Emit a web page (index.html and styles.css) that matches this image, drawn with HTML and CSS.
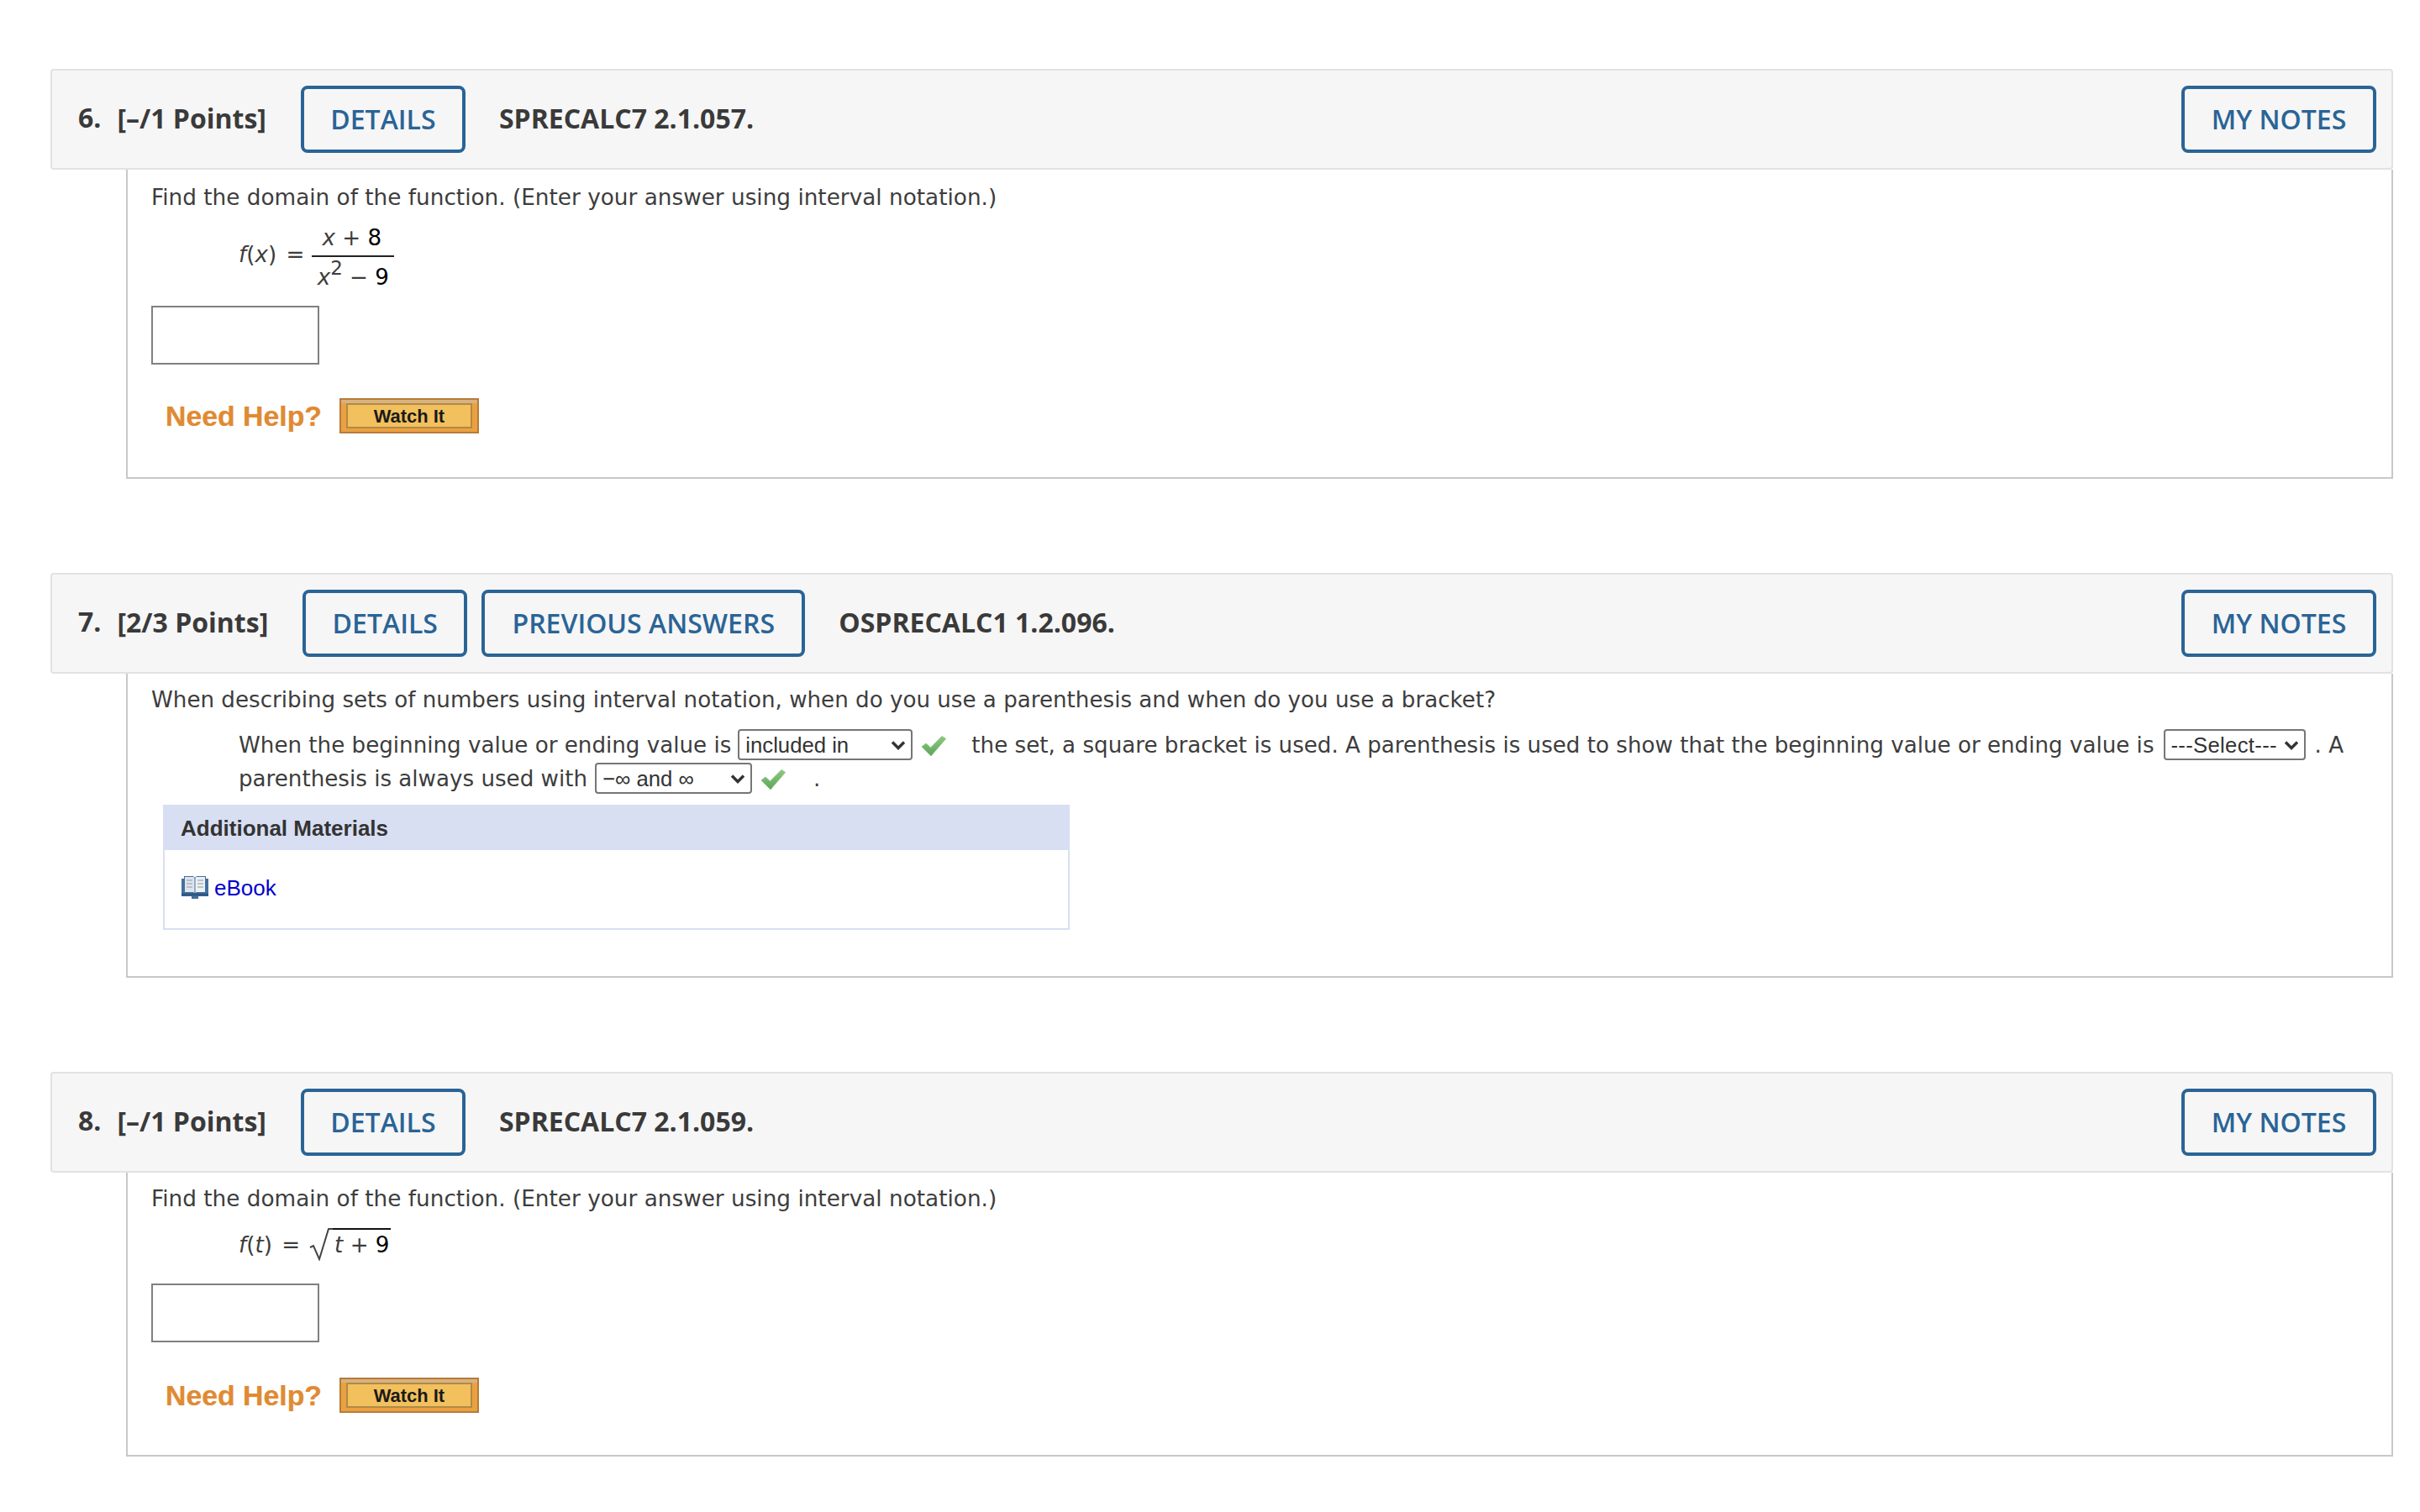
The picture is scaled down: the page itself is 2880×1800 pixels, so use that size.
FILE: index.html
```html
<!DOCTYPE html>
<html lang="en">
<head>
<meta charset="utf-8">
<title>Questions</title>
<link rel="stylesheet" href="styles.css">
</head>
<body>
<svg class="defs" width="0" height="0" aria-hidden="true">
  <defs>
    <linearGradient id="tickfill" x1="0" y1="0" x2="0" y2="1">
      <stop offset="0" stop-color="#8cc97f"/>
      <stop offset="1" stop-color="#5fa45c"/>
    </linearGradient>
    <symbol id="check" viewBox="0 0 30 26">
      <path d="M1 14 L6 10 L11.5 15 L25 1.5 L29.5 4.5 L12 25 Z" fill="url(#tickfill)" stroke="#8cc585" stroke-width="1" stroke-linejoin="round"/>
    </symbol>
  </defs>
</svg>

<section class="question">
  <header class="qhead">
    <span class="qnum">6.</span>
    <span class="qpoints">[–/1 Points]</span>
    <a class="btn">DETAILS</a>
    <span class="qcode">SPRECALC7 2.1.057.</span>
    <a class="btn btn-notes">MY NOTES</a>
  </header>
  <div class="qbody">
    <p class="lead">Find the domain of the function. (Enter your answer using interval notation.)</p>
    <div class="formula">
      <span class="math"><i>f</i>(<i>x</i>) =</span>
      <span class="frac">
        <span class="num"><i>x</i> + <b class="dark">8</b></span>
        <span class="den"><i>x</i><sup>2</sup> − <b class="dark">9</b></span>
      </span>
    </div>
    <input class="answer" type="text" aria-label="answer">
    <div class="help">
      <span class="help-label">Need Help?</span>
      <span class="watch"><span class="watch-in">Watch It</span></span>
    </div>
  </div>
</section>

<section class="question">
  <header class="qhead">
    <span class="qnum">7.</span>
    <span class="qpoints">[2/3 Points]</span>
    <a class="btn">DETAILS</a>
    <a class="btn btn-prev">PREVIOUS ANSWERS</a>
    <span class="qcode">OSPRECALC1 1.2.096.</span>
    <a class="btn btn-notes">MY NOTES</a>
  </header>
  <div class="qbody qbody-mid">
    <p class="lead lead-mid">When describing sets of numbers using interval notation, when do you use a parenthesis and when do you use a bracket?</p>
    <div class="para">
      <div class="pline">
        <span>When the beginning value or ending value is</span>
        <select class="sel sel-a"><option>included in</option></select>
        <svg class="tick"><use href="#check"/></svg>
        <span class="after-tick">the set, a square bracket is used. A parenthesis is used to show that the beginning value or ending value is</span>
        <select class="sel sel-b"><option>---Select---</option></select>
        <span class="tail">. A</span>
      </div>
      <div class="pline pline-2">
        <span>parenthesis is always used with</span>
        <select class="sel sel-c"><option>−∞ and ∞</option></select>
        <svg class="tick"><use href="#check"/></svg>
        <span class="dot">.</span>
      </div>
    </div>
    <div class="materials">
      <div class="mat-head">Additional Materials</div>
      <div class="mat-body">
        <svg class="book" viewBox="0 0 34 30" aria-hidden="true">
          <path d="M1 5 H4 V2 H15 L17 4 L19 2 H30 V5 H33 V26 H21 V29 H13 V26 H1 Z" fill="#43709f"/>
          <path d="M5 3 H15.5 L16.5 5 V22 L15 21 H5 Z" fill="#dfe5ea"/>
          <path d="M29 3 H18.5 L17.5 5 V22 L19 21 H29 Z" fill="#eef1f3"/>
          <path d="M7 7 H14 M7 11 H14 M7 15 H14 M20 7 H27 M20 11 H27 M20 15 H27" stroke="#a9b4bf" stroke-width="1.6"/>
          <path d="M1 24 H33" stroke="#2e5682" stroke-width="3"/>
        </svg>
        <a class="ebook">eBook</a>
      </div>
    </div>
  </div>
</section>

<section class="question">
  <header class="qhead">
    <span class="qnum">8.</span>
    <span class="qpoints">[–/1 Points]</span>
    <a class="btn">DETAILS</a>
    <span class="qcode">SPRECALC7 2.1.059.</span>
    <a class="btn btn-notes">MY NOTES</a>
  </header>
  <div class="qbody qbody-root">
    <p class="lead">Find the domain of the function. (Enter your answer using interval notation.)</p>
    <div class="formula formula-root">
      <span class="math"><i>f</i>(<i>t</i>) =</span>
      <svg class="radical" viewBox="0 0 28 40" aria-hidden="true">
        <path d="M1 24 L5 22 L12 38 L23 2 H28" fill="none" stroke="#444" stroke-width="2"/>
      </svg>
      <span class="radicand"><i>t</i> + <b class="dark">9</b></span>
    </div>
    <input class="answer answer-root" type="text" aria-label="answer">
    <div class="help help-root">
      <span class="help-label">Need Help?</span>
      <span class="watch"><span class="watch-in">Watch It</span></span>
    </div>
  </div>
</section>
</body>
</html>
```

FILE: styles.css
```css
html, body { margin: 0; padding: 0; background: #fff; }
body {
  padding: 82px 32px 0 60px;
  font-family: "DejaVu Sans", Verdana, sans-serif;
  font-size: 26.15px;
  color: #3d3d3d;
}
.defs { position: absolute; }
.question { margin-bottom: 112px; }
.qhead {
  display: flex;
  align-items: center;
  height: 120px;
  box-sizing: border-box;
  padding: 0 18px 0 31px;
  background: #f6f6f6;
  border: 2px solid #e2e2e2;
  border-radius: 4px;
  font-family: "Open Sans", sans-serif;
  font-weight: 700;
  font-size: 32px;
  color: #3a3a3a;
}
.qnum { margin-right: 19px; margin-bottom: 5px; }
.qpoints { margin-right: 41px; margin-bottom: 3px; }
.btn {
  display: flex;
  align-items: center;
  justify-content: center;
  box-sizing: border-box;
  width: 196px;
  height: 80px;
  padding-bottom: 2px;
  border: 4px solid #2a6496;
  border-radius: 8px;
  color: #2a6496;
  font-weight: 600;
}
.btn-prev { width: 385px; margin-left: 17px; }
.qcode { margin-left: 40px; margin-bottom: 3px; }
.btn-notes { margin-left: auto; width: 232px; }
.qbody {
  margin-left: 90px;
  padding: 13px 0 52px 28px;
  border: 2px solid #c8c8c8;
  border-top: 0;
}
.lead { margin: 0; height: 40px; line-height: 40px; font-size: 26.3px; }
.formula {
  display: flex;
  align-items: center;
  height: 90px;
  margin: 6px 0 0 104px;
}
.math { margin-right: 9px; position: relative; top: -3px; word-spacing: 3px; }
.frac { display: inline-flex; flex-direction: column; align-items: center; width: 98px; }
.num { height: 43px; line-height: 44px; margin-right: 3px; }
.den {
  align-self: stretch;
  text-align: center;
  height: 45px;
  line-height: 48px;
  border-top: 2px solid #222;
}
.den sup { font-size: 23px; line-height: 0; vertical-align: 12px; }
.dark { font-weight: 400; color: #000; }
.answer {
  display: block;
  box-sizing: border-box;
  width: 200px;
  height: 70px;
  margin: 13px 0 0;
  padding: 0;
  border: 2px solid #808080;
  background: #fff;
  border-radius: 0;
  outline: 0;
}
.help { display: flex; align-items: center; height: 42px; margin-top: 40px; padding-left: 17px; }
.help-root { margin-top: 42px; }
.help-label {
  font-family: "Liberation Sans", Arial, sans-serif;
  font-weight: 700;
  font-size: 33.8px;
  color: #e08a33;
  text-shadow: 0 0 1px rgba(224, 138, 51, 0.5);
}
.watch {
  display: block;
  box-sizing: border-box;
  width: 166px;
  height: 42px;
  margin-left: 21px;
  padding: 4px 6px;
  background: #eba13f;
  border: 2px solid #b47c3c;
  box-shadow: inset 0 4px 0 #d8b27f;
}
.watch-in {
  display: block;
  height: 100%;
  box-sizing: border-box;
  border: 2px solid #b08a48;
  background: #f2c05c;
  text-align: center;
  font-family: "Liberation Sans", Arial, sans-serif;
  font-weight: 700;
  font-size: 21.9px;
  line-height: 27px;
  color: #1a1a1a;
}
.qbody-mid { padding: 13px 0 55px 28px; }
.lead-mid { height: 36px; line-height: 36px; font-size: 26.15px; }
.para { margin: 17px 0 0 104px; }
.pline { display: flex; align-items: center; height: 37px; white-space: nowrap; }
.pline-2 { margin-top: 3px; }
.sel {
  appearance: none;
  box-sizing: border-box;
  height: 37px;
  margin: 0 0 0 8px;
  padding: 0 0 0 7px;
  border: 2px solid #767676;
  border-radius: 4px;
  background: #fff url("data:image/svg+xml,%3Csvg xmlns='http://www.w3.org/2000/svg' width='18' height='12'%3E%3Cpath d='M2 2.5 L9 9.5 L16 2.5' fill='none' stroke='%23333' stroke-width='3.4'/%3E%3C/svg%3E") no-repeat right 6px center;
  color: #333;
  font-family: "Liberation Sans", Arial, sans-serif;
  font-size: 25.7px;
}
.sel-a { width: 208px; }
.sel-b { width: 169px; margin-left: 11px; padding-left: 7px; letter-spacing: 0.3px; }
.sel-c { width: 187px; margin-left: 9px; }
.tick { width: 30px; height: 26px; margin: 2px 0 0 10px; flex: none; }
.after-tick { margin-left: 30px; }
.tail { margin-left: 11px; }
.dot { margin-left: 33px; }
.materials {
  width: 1079px;
  box-sizing: border-box;
  margin: 13px 0 0 14px;
  border: 2px solid #d8dff3;
  height: 149px;
  font-family: "Liberation Sans", Arial, sans-serif;
  font-size: 26px;
}
.mat-head {
  height: 52px;
  line-height: 52px;
  padding-left: 19px;
  background: #d8dff3;
  font-weight: 700;
  color: #333;
}
.mat-body { display: flex; align-items: center; height: 91px; padding-left: 19px; }
.book { width: 34px; height: 30px; margin-right: 6px; position: relative; top: -2px; }
.ebook { color: #0000cc; }
.qbody-root { padding-top: 11px; padding-bottom: 50px; }
.formula-root { height: 40px; margin-top: 15px; }
.formula-root .math { margin-right: 11px; top: 0; }
.radical { width: 28px; height: 40px; flex: none; margin-top: -2px; }
.radicand { border-top: 2px solid #111; line-height: 36px; height: 36px; margin-top: -3px; padding: 0 1px 0 2px; }
.answer-root { margin-top: 26px; }
```
